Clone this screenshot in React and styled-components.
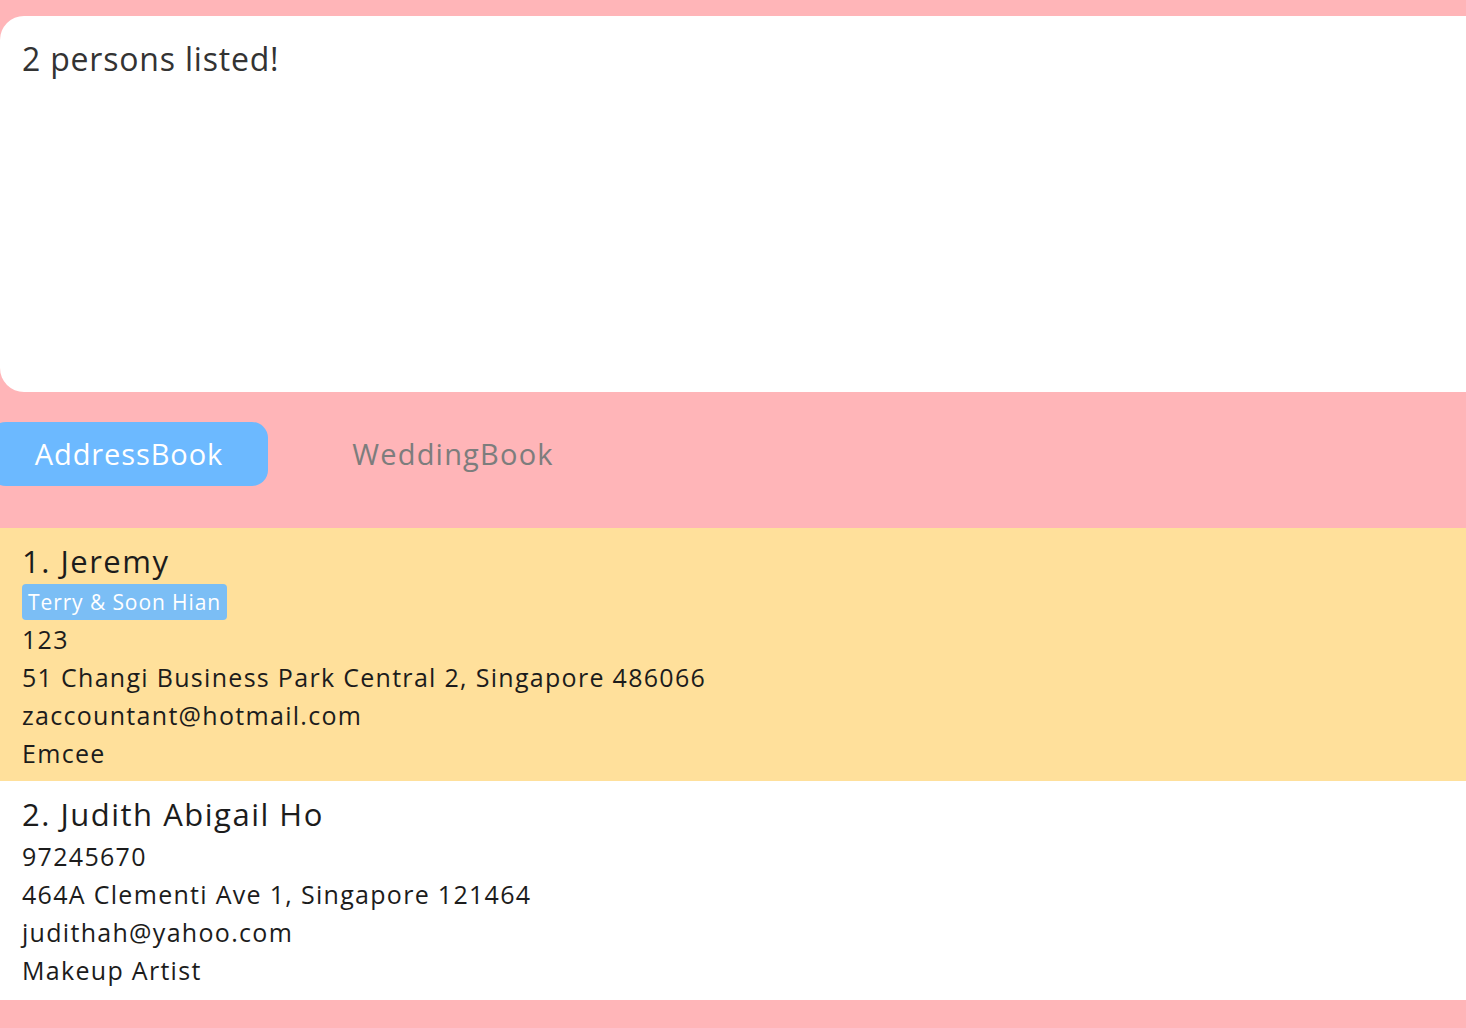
import React from 'react';
import styled, { createGlobalStyle } from 'styled-components';

const GlobalStyle = createGlobalStyle`
  html, body {
    margin: 0;
    padding: 0;
    background: #ffb5b8;
    overflow: hidden;
  }
  body {
    font-family: 'Open Sans', 'Noto Sans', sans-serif;
  }
`;

const Page = styled.div`
  width: 1466px;
  height: 1028px;
  padding-top: 16px;
  box-sizing: border-box;
  background: #ffb5b8;
  display: flex;
  flex-direction: column;
  overflow: hidden;
`;

const ResultPanel = styled.div`
  height: 376px;
  background: #ffffff;
  border-radius: 24px 0 0 24px;
  padding: 21px 22px;
  box-sizing: border-box;
  font-size: 32px;
  letter-spacing: 0.8px;
  line-height: 44px;
  color: #333333;
`;

const TabBar = styled.div`
  display: flex;
  align-items: center;
  gap: 46px;
  margin: 30px 0 42px -10px;
`;

const Tab = styled.div`
  width: 278px;
  height: 64px;
  padding-bottom: 2px;
  box-sizing: border-box;
  border-radius: 16px;
  display: flex;
  align-items: center;
  justify-content: center;
  font-size: 29px;
  letter-spacing: ${(p) => (p.$active ? '0.9px' : '1.2px')};
  background: ${(p) => (p.$active ? '#6cb9ff' : 'transparent')};
  color: ${(p) => (p.$active ? '#ffffff' : '#7d7d7d')};
`;

const List = styled.div`
  display: flex;
  flex-direction: column;
`;

const Card = styled.div`
  background: ${(p) => (p.$selected ? '#ffe09b' : '#ffffff')};
  padding: 13px 22px ${(p) => (p.$selected ? '9px' : '11px')};
  color: #1c1c1c;
`;

const Name = styled.div`
  font-size: 31px;
  letter-spacing: 1.5px;
  line-height: 40px;
  padding-bottom: 3px;
`;

const Tags = styled.div`
  display: flex;
  gap: 6px;
`;

const Tag = styled.span`
  background: #7bbef5;
  color: #ffffff;
  border-radius: 4px;
  height: 36px;
  line-height: 36px;
  padding: 0 6px;
  font-size: 21px;
  letter-spacing: 0.9px;
`;

const Field = styled.div`
  font-size: 25px;
  letter-spacing: 1.3px;
  line-height: 38px;
`;

const persons = [
  {
    name: 'Jeremy',
    tags: ['Terry & Soon Hian'],
    phone: '123',
    address: '51 Changi Business Park Central 2, Singapore 486066',
    email: 'zaccountant@hotmail.com',
    role: 'Emcee',
  },
  {
    name: 'Judith Abigail Ho',
    tags: [],
    phone: '97245670',
    address: '464A Clementi Ave 1, Singapore 121464',
    email: 'judithah@yahoo.com',
    role: 'Makeup Artist',
  },
];

export default function App() {
  return (
    <>
      <GlobalStyle />
      <Page>
        <ResultPanel>2 persons listed!</ResultPanel>
        <TabBar>
          <Tab $active>AddressBook</Tab>
          <Tab>WeddingBook</Tab>
        </TabBar>
        <List>
          {persons.map((p, i) => (
            <Card key={p.name} $selected={i === 0}>
              <Name>
                {i + 1}. {p.name}
              </Name>
              {p.tags.length > 0 && (
                <Tags>
                  {p.tags.map((t) => (
                    <Tag key={t}>{t}</Tag>
                  ))}
                </Tags>
              )}
              <Field>{p.phone}</Field>
              <Field>{p.address}</Field>
              <Field>{p.email}</Field>
              <Field>{p.role}</Field>
            </Card>
          ))}
        </List>
      </Page>
    </>
  );
}
